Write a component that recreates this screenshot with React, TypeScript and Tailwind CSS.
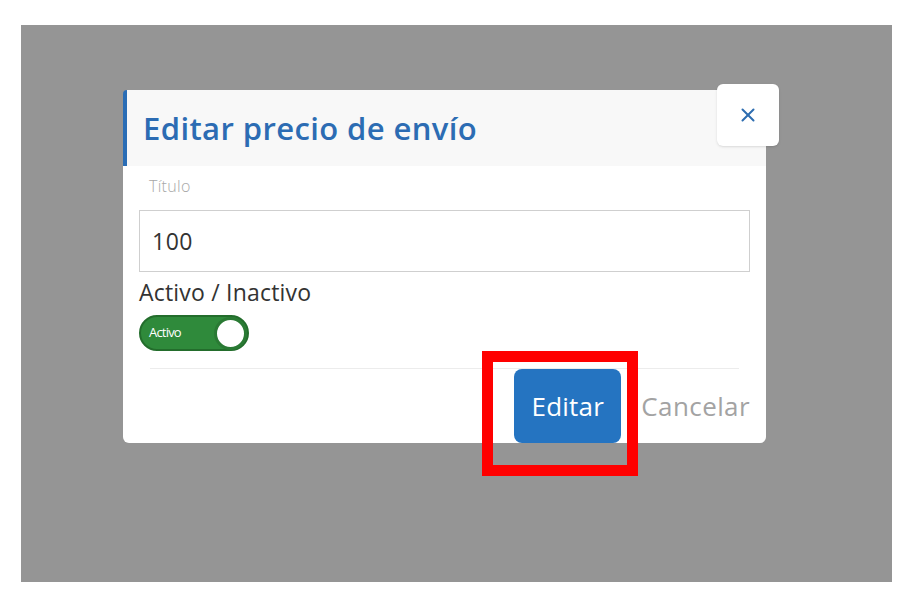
import React from 'react';
import { X } from 'lucide-react';

const font = { fontFamily: '"Open Sans", Lato, sans-serif' };

const EditShippingModal: React.FC = () => {
  return (
    <div className="relative w-[643px] h-[353px] bg-white rounded-md ml-[102px] mt-[65px] flex flex-col">
      <div className="h-[76px] bg-[#f8f8f8] border-l-4 border-[#2a6db5] rounded-tl-sm flex items-center pl-[16px]">
        <h2 className="text-[31px] text-[#2c6cb3] font-semibold tracking-[0.4px] leading-[40px]">Editar precio de envío</h2>
      </div>

      <button className="absolute -top-[6px] -right-[13px] w-[62px] h-[62px] bg-white rounded-md shadow-sm flex items-center justify-center">
        <X size={22} strokeWidth={2.2} className="text-[#2e6db0]" />
      </button>

      <div className="px-4 flex flex-col">
        <label className="text-[16px] font-light text-[#a8a8a8] pl-[10px] pt-[8px] leading-[24px] tracking-[0.3px]">Título</label>
        <div className="mt-[12px] h-[62px] border border-[#cfcfcf] flex items-center px-[12px]">
          <span className="text-[23px] text-[#333] tracking-[0.5px]">100</span>
        </div>
        <div className="mt-[4px] text-[23px] text-[#333] leading-[32px] tracking-[0.2px]">Activo / Inactivo</div>
        <div className="mt-[7px] w-[110px] h-[36px] rounded-full bg-[#2f8a3b] border-2 border-[#236d2c] flex items-center justify-between pl-[8px] pr-0">
          <span className="text-[13px] text-white tracking-[-0.8px]">Activo</span>
          <span className="w-[33px] h-[33px] rounded-full bg-white border-[3px] border-[#2a7a34]" />
        </div>
        <div className="mt-[17px] mx-[11px] border-t border-[#ececec]" />
        <div className="flex items-center justify-end gap-[20px]">
          <button className="w-[107px] h-[74px] bg-[#2574c1] rounded-lg text-white text-[26px] tracking-[0.2px]">Editar</button>
          <span className="text-[26px] text-[#a3a3a3] tracking-[0.4px]">Cancelar</span>
        </div>
      </div>
    </div>
  );
};

export default function App() {
  return (
    <div className="relative w-[913px] h-[603px] bg-white overflow-hidden" style={font}>
      <div className="absolute left-[21px] top-[25px] w-[871px] h-[557px] bg-[#959595] flex flex-col">
        <EditShippingModal />
      </div>
      <div className="absolute left-[482px] top-[351px] w-[156px] h-[125px] border-[11px] border-[#ff0000]" />
    </div>
  );
}
